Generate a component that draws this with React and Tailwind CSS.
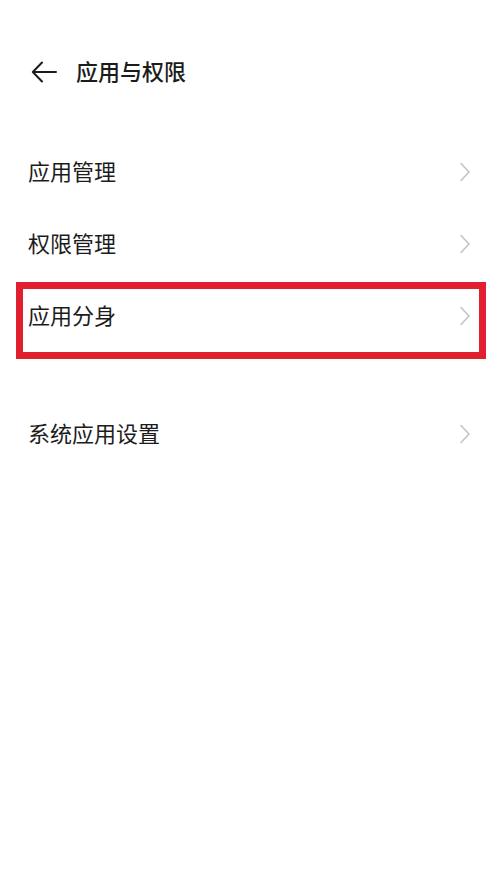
import React from "react";

const font = { fontFamily: '"Noto Sans CJK SC", "Noto Sans", sans-serif' };

function Chevron() {
  return (
    <svg width="12" height="20" viewBox="0 0 12 20" fill="none" className="shrink-0">
      <path d="M2 1.5 L10 10 L2 18.5" stroke="#c4c4c4" strokeWidth="1.6" strokeLinecap="round" strokeLinejoin="round" />
    </svg>
  );
}

function Row({ label, highlight }) {
  return (
    <div className="relative flex h-[72px] items-center justify-between pl-[28px] pr-[29px]">
      <span className="pb-[5px] text-[22px] leading-none text-[#1c1c1c]">{label}</span>
      <Chevron />
      {highlight && (
        <div className="pointer-events-none absolute left-[16px] right-[14px] top-[2px] bottom-[-7px] border-[7px] border-[#e0202e]" />
      )}
    </div>
  );
}

export default function App() {
  return (
    <div className="min-h-[888px] w-[500px] bg-white" style={font}>
      <div className="flex h-[136px] items-start pt-[52px]">
        <div className="flex h-[40px] items-center pl-[31px]">
          <svg width="26" height="22" viewBox="0 0 26 22" fill="none">
            <path d="M11 1.5 L1.8 11 L11 20.5 M2 11 H25" stroke="#1c1c1c" strokeWidth="2" strokeLinecap="round" strokeLinejoin="round" />
          </svg>
          <span className="ml-[19px] pb-[5px] text-[22px] font-medium leading-none text-[#1c1c1c]">应用与权限</span>
        </div>
      </div>
      <Row label="应用管理" />
      <Row label="权限管理" />
      <Row label="应用分身" highlight />
      <div className="h-[46px]" />
      <Row label="系统应用设置" />
    </div>
  );
}
